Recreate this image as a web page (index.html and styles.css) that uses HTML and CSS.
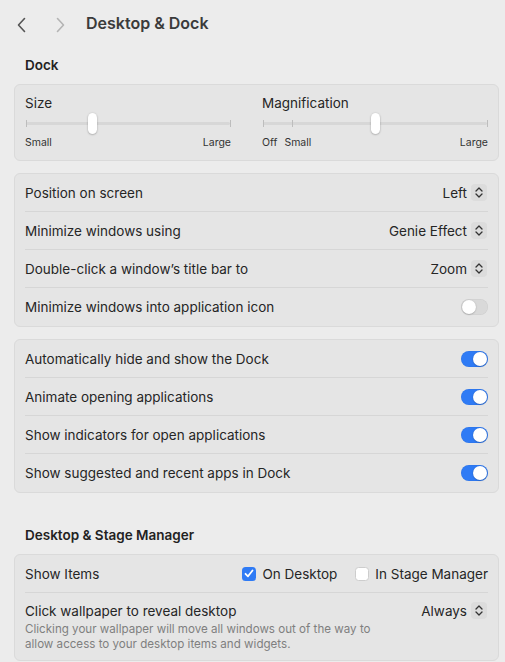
FILE: index.html
```html
<!DOCTYPE html>
<html lang="en">
<head>
    <meta charset="UTF-8">
    <meta name="viewport" content="width=device-width, initial-scale=1.0">
    <title>Desktop &amp; Dock</title>
    <link rel="stylesheet" href="styles.css">
</head>
<body>
    <div class="toolbar">
        <svg class="nav" width="12" height="16" viewBox="0 0 12 16"><path d="M8.5 1.5 L2.5 8 L8.5 14.5" fill="none" stroke="#555" stroke-width="1.6" stroke-linecap="round" stroke-linejoin="round"/></svg>
        <svg class="nav fwd" width="12" height="16" viewBox="0 0 12 16"><path d="M3.5 1.5 L9.5 8 L3.5 14.5" fill="none" stroke="#b4b4b4" stroke-width="1.6" stroke-linecap="round" stroke-linejoin="round"/></svg>
        <h1>Desktop &amp; Dock</h1>
    </div>

    <div class="page">
        <h2 class="section-title">Dock</h2>
        <div class="card sliders">
            <div class="slider-group">
                <div class="slider-label">Size</div>
                <div class="track">
                    <span class="tick" style="left: 0%"></span>
                    <span class="tick" style="left: 100%"></span>
                    <span class="knob" style="left: 32.8%"></span>
                </div>
                <div class="slider-ends">
                    <span>Small</span>
                    <span class="end">Large</span>
                </div>
            </div>
            <div class="slider-group">
                <div class="slider-label">Magnification</div>
                <div class="track">
                    <span class="tick" style="left: 0%"></span>
                    <span class="tick" style="left: 13.2%"></span>
                    <span class="tick" style="left: 100%"></span>
                    <span class="knob" style="left: 50.4%"></span>
                </div>
                <div class="slider-ends">
                    <span>Off</span>
                    <span class="mid">Small</span>
                    <span class="end">Large</span>
                </div>
            </div>
        </div>

        <div class="card">
            <div class="row">
                <span>Position on screen</span>
                <span class="popup">Left <span class="stepper"><svg width="8" height="11" viewBox="0 0 8 11"><path d="M1 4 L4 1 L7 4 M1 7 L4 10 L7 7" fill="none" stroke="#333" stroke-width="1.3" stroke-linecap="round" stroke-linejoin="round"/></svg></span></span>
            </div>
            <div class="row">
                <span>Minimize windows using</span>
                <span class="popup">Genie Effect <span class="stepper"><svg width="8" height="11" viewBox="0 0 8 11"><path d="M1 4 L4 1 L7 4 M1 7 L4 10 L7 7" fill="none" stroke="#333" stroke-width="1.3" stroke-linecap="round" stroke-linejoin="round"/></svg></span></span>
            </div>
            <div class="row">
                <span>Double-click a window’s title bar to</span>
                <span class="popup">Zoom <span class="stepper"><svg width="8" height="11" viewBox="0 0 8 11"><path d="M1 4 L4 1 L7 4 M1 7 L4 10 L7 7" fill="none" stroke="#333" stroke-width="1.3" stroke-linecap="round" stroke-linejoin="round"/></svg></span></span>
            </div>
            <div class="row">
                <span>Minimize windows into application icon</span>
                <span class="switch"></span>
            </div>
        </div>

        <div class="card">
            <div class="row">
                <span>Automatically hide and show the Dock</span>
                <span class="switch on"></span>
            </div>
            <div class="row">
                <span>Animate opening applications</span>
                <span class="switch on"></span>
            </div>
            <div class="row">
                <span>Show indicators for open applications</span>
                <span class="switch on"></span>
            </div>
            <div class="row">
                <span>Show suggested and recent apps in Dock</span>
                <span class="switch on"></span>
            </div>
        </div>

        <h2 class="section-title second">Desktop &amp; Stage Manager</h2>
        <div class="card">
            <div class="row">
                <span>Show Items</span>
                <div class="checks">
                    <label class="check"><span class="box checked"><svg width="10" height="9" viewBox="0 0 10 9"><path d="M1.5 4.8 L4 7.3 L8.5 1.5" fill="none" stroke="#fff" stroke-width="1.8" stroke-linecap="round" stroke-linejoin="round"/></svg></span>On Desktop</label>
                    <label class="check"><span class="box"></span>In Stage Manager</label>
                </div>
            </div>
            <div class="row tall">
                <div>
                    <div>Click wallpaper to reveal desktop</div>
                    <div class="desc">Clicking your wallpaper will move all windows out of the way to<br>allow access to your desktop items and widgets.</div>
                </div>
                <span class="popup">Always <span class="stepper"><svg width="8" height="11" viewBox="0 0 8 11"><path d="M1 4 L4 1 L7 4 M1 7 L4 10 L7 7" fill="none" stroke="#333" stroke-width="1.3" stroke-linecap="round" stroke-linejoin="round"/></svg></span></span>
            </div>
        </div>
    </div>
</body>
</html>
```

FILE: styles.css
```css
body {
    font-family: Inter, "Liberation Sans", sans-serif;
    font-size: 13.5px;
    color: #262626;
    background-color: #ececec;
    margin: 0;
    padding: 0;
}
.toolbar {
    height: 46px;
    display: flex;
    align-items: center;
    padding-left: 16px;
}
.nav {
    margin-top: 4px;
}
.nav.fwd {
    margin-left: 26px;
}
.toolbar h1 {
    margin: 0 0 0 20px;
    font-size: 16px;
    font-weight: 600;
    color: #3b3b3b;
}
.page {
    padding: 0 6px 0 14px;
}
.section-title {
    margin: 11px 0 11px 11px;
    font-size: 13.5px;
    line-height: 16px;
    font-weight: 600;
    color: #222;
}
.section-title.second {
    margin-top: 34px;
}
.card {
    background: #e5e5e5;
    border: 1px solid #dadada;
    border-radius: 6px;
    margin-bottom: 12px;
}
.sliders {
    display: grid;
    grid-template-columns: 206px 1fr;
    column-gap: 31px;
    padding: 10px 10px 11px 10px;
}
.slider-label {
    line-height: 16px;
}
.track {
    position: relative;
    height: 25px;
    margin: 0 1px;
}
.track::before {
    content: "";
    position: absolute;
    left: 0;
    right: 0;
    top: 11px;
    height: 3px;
    border-radius: 2px;
    background: #d7d7d7;
}
.tick {
    position: absolute;
    top: 9px;
    width: 1px;
    height: 7px;
    margin-left: -0.5px;
    background: #bdbdbd;
}
.knob {
    position: absolute;
    top: 2px;
    width: 9px;
    height: 21px;
    margin-left: -4.5px;
    border-radius: 5px;
    background: #fff;
    box-shadow: 0 0.5px 2px rgba(0,0,0,0.35);
}
.slider-ends {
    display: flex;
    font-size: 10.5px;
    line-height: 12px;
    color: #333;
    margin-top: 1px;
}
.slider-ends .mid {
    margin-left: 7px;
}
.slider-ends .end {
    margin-left: auto;
}
.row {
    display: flex;
    justify-content: space-between;
    align-items: center;
    height: 38px;
    box-sizing: border-box;
    margin: 0 10px;
    border-bottom: 1px solid #d6d6d6;
}
.row:last-child {
    border-bottom: none;
}
.row.tall {
    height: auto;
    align-items: flex-start;
    padding: 10px 0 8px;
    line-height: 16px;
}
.row.tall .popup {
    margin-top: -1px;
}
.desc {
    font-size: 11.6px;
    line-height: 15px;
    color: #7f7f7f;
    margin-top: 3px;
}
.popup {
    display: flex;
    align-items: center;
    gap: 4px;
    margin-right: 1px;
}
.stepper {
    display: flex;
    align-items: center;
    justify-content: center;
    width: 16px;
    height: 17px;
    border-radius: 4px;
    background: #dcdcdc;
}
.switch {
    position: relative;
    width: 27px;
    height: 16px;
    border-radius: 8px;
    background: #d9d9d9;
    box-shadow: inset 0 0 0 0.5px rgba(0,0,0,0.06);
}
.switch::after {
    content: "";
    position: absolute;
    top: 1px;
    left: 1px;
    width: 14px;
    height: 14px;
    border-radius: 50%;
    background: #fff;
    box-shadow: 0 0.5px 1.5px rgba(0,0,0,0.3);
}
.switch.on {
    background: #2f7bf5;
}
.switch.on::after {
    left: 12px;
}
.checks {
    display: flex;
    gap: 18px;
}
.check {
    display: flex;
    align-items: center;
    gap: 6px;
}
.box {
    display: flex;
    align-items: center;
    justify-content: center;
    width: 14px;
    height: 14px;
    box-sizing: border-box;
    border-radius: 3.5px;
    background: #fff;
    border: 1px solid #cdcdcd;
}
.box.checked {
    background: #2f7bf5;
    border: none;
}
```
